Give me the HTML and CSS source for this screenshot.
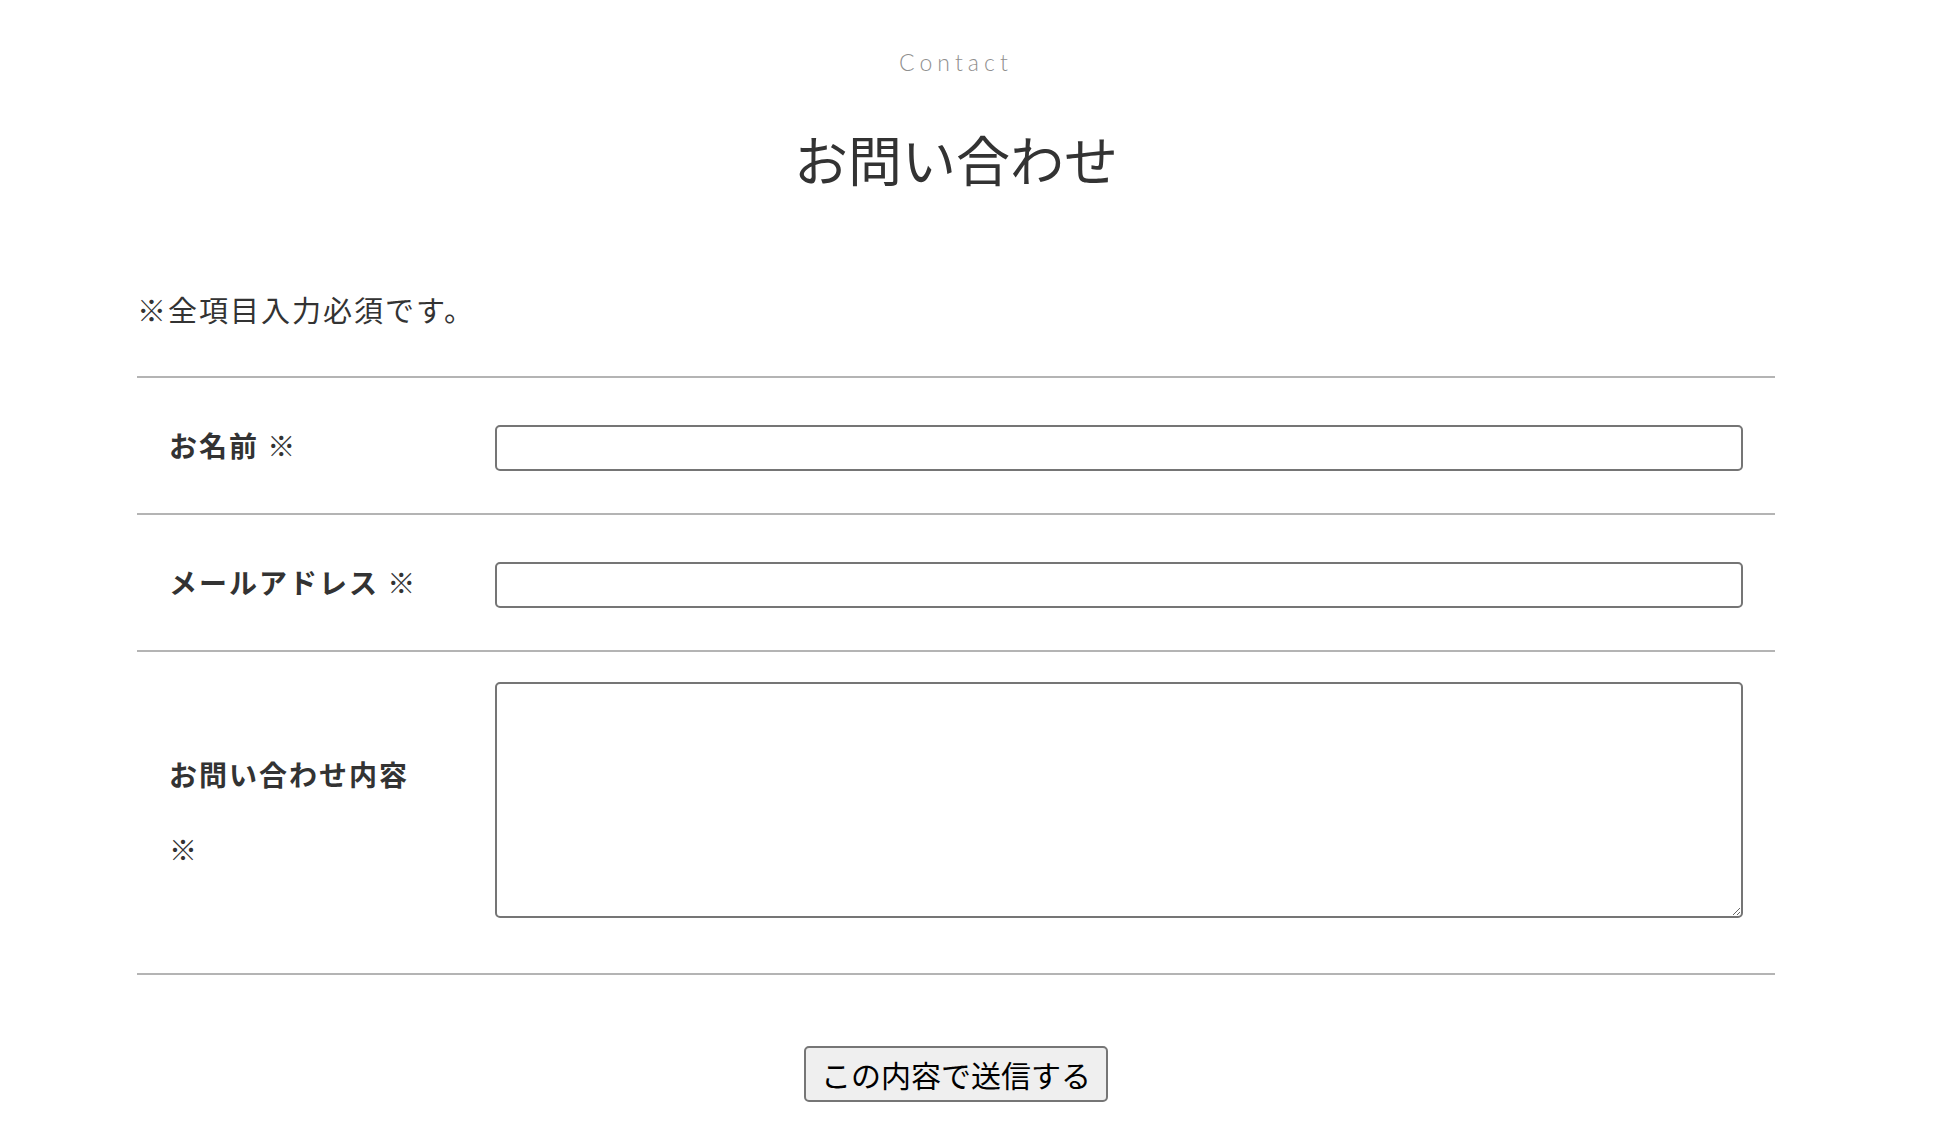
FILE: index.html
```html
<!DOCTYPE html>
<html lang="ja">
<head>
<meta charset="utf-8">
<title>お問い合わせ</title>
<link rel="stylesheet" href="styles.css">
</head>
<body>
<main class="contact">
  <p class="contact-en">Contact</p>
  <h1 class="contact-title">お問い合わせ</h1>
  <p class="contact-note">※全項目入力必須です。</p>
  <form class="contact-form">
    <div class="form-row">
      <label class="form-label" for="name">お名前 ※</label>
      <div class="form-field form-field--line"><input class="form-input" id="name" type="text"></div>
    </div>
    <div class="form-row">
      <label class="form-label" for="mail">メールアドレス ※</label>
      <div class="form-field form-field--line"><input class="form-input" id="mail" type="email"></div>
    </div>
    <div class="form-row">
      <label class="form-label" for="msg">お問い合わせ内容<br>※</label>
      <div class="form-field"><textarea class="form-textarea" id="msg"></textarea></div>
    </div>
    <div class="form-submit">
      <button class="submit-btn" type="button">この内容で送信する</button>
    </div>
  </form>
</main>
</body>
</html>
```
FILE: styles.css
```css
html, body {
  margin: 0;
  background: #ffffff;
}
body {
  padding: 0 24px 0 0;
  font-family: "Noto Sans CJK JP", "Noto Sans", sans-serif;
  color: #333333;
}
.contact {
  width: 1638px;
  margin: 0 auto;
  padding-top: 48px;
}
.contact-en {
  margin: 0;
  text-align: center;
  font-family: Lato, "Noto Sans", sans-serif;
  font-weight: 300;
  font-size: 23px;
  line-height: 28px;
  letter-spacing: 0.22em;
  color: #8f8f8f;
}
.contact-title {
  margin: 51px 0 0;
  text-align: center;
  font-size: 54px;
  font-weight: 400;
  line-height: 1.2;
  color: #333333;
}
.contact-note {
  margin: 96px 0 0;
  font-size: 29px;
  line-height: 42px;
  letter-spacing: 2px;
  color: #333333;
}
.contact-form {
  margin-top: 46px;
  border-top: 2px solid #b4b4b4;
}
.form-row {
  display: grid;
  grid-template-columns: 326px 1fr;
  align-items: center;
  padding: 30px 32px;
  border-bottom: 2px solid #b4b4b4;
}
.form-label {
  font-size: 28px;
  font-weight: 700;
  line-height: 75px;
  letter-spacing: 2px;
  color: #333333;
}
.form-field {
  display: flex;
  flex-direction: column;
}
.form-field--line {
  padding-top: 5px;
}
.form-input {
  box-sizing: border-box;
  display: block;
  width: 100%;
  height: 46px;
  margin: 0;
  border: 2px solid #757575;
  border-radius: 5px;
  background: #ffffff;
  font-size: 24px;
}
.form-textarea {
  box-sizing: border-box;
  display: block;
  width: 100%;
  height: 236px;
  margin: 0 0 25px;
  border: 2px solid #757575;
  border-radius: 5px;
  background: #ffffff;
  font-size: 24px;
}
.form-submit {
  display: flex;
  justify-content: center;
  padding-top: 71px;
}
.submit-btn {
  box-sizing: border-box;
  height: 56px;
  padding: 0 15px;
  border: 2px solid #767676;
  border-radius: 5px;
  background: #efefef;
  color: #000000;
  font-family: "Noto Sans CJK JP", "Noto Sans", sans-serif;
  font-size: 30px;
  line-height: 1;
}
```
